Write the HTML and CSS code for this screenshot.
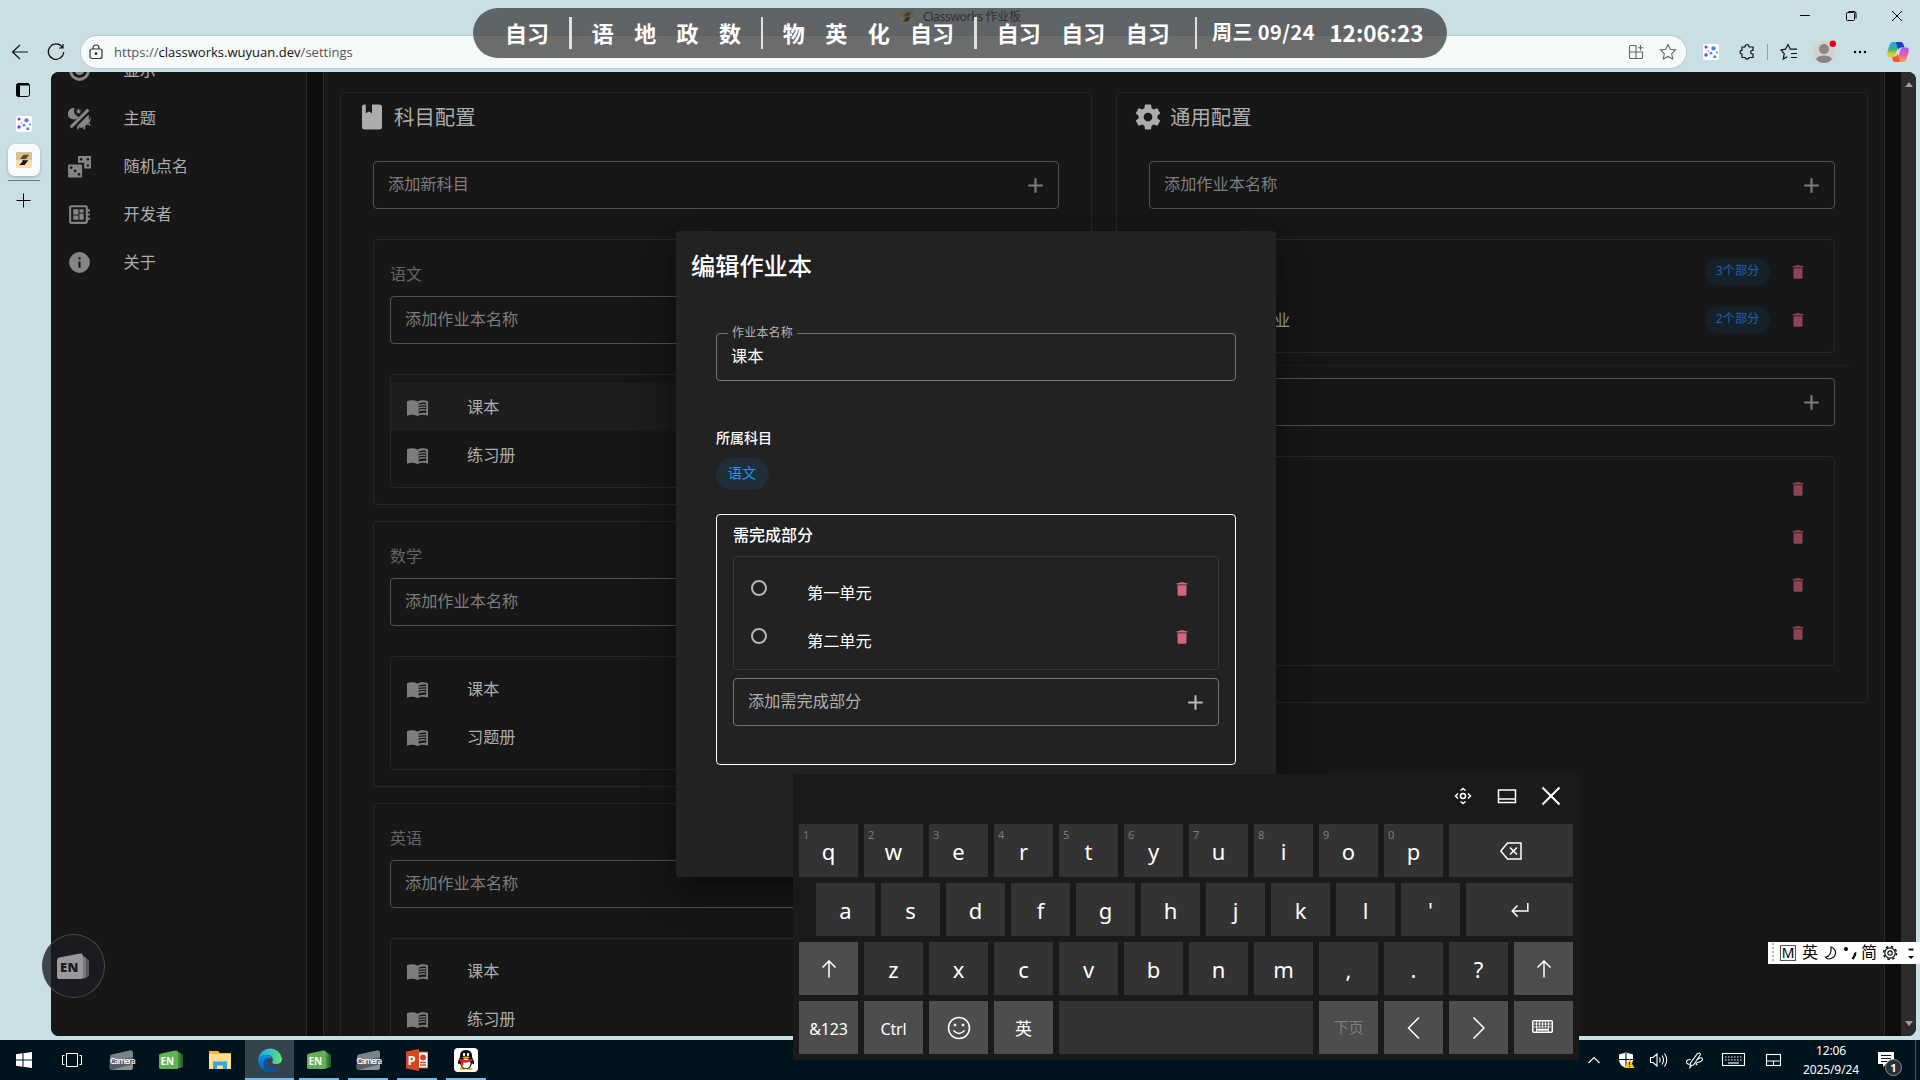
FILE: index.html
```html
<!DOCTYPE html>
<html lang="zh-CN">
<head>
<meta charset="utf-8">
<title>Classworks 作业板</title>
<link rel="stylesheet" href="styles.css">
</head>
<body>
<svg class="defs" aria-hidden="true">
  <symbol id="i-delete" viewBox="0 0 24 24"><path d="M19,4H15.5L14.5,3H9.5L8.5,4H5V6H19M6,19A2,2 0 0,0 8,21H16A2,2 0 0,0 18,19V7H6V19Z"/></symbol>
  <symbol id="i-plus" viewBox="0 0 24 24"><path d="M19,13H13V19H11V13H5V11H11V5H13V11H19V13Z"/></symbol>
  <symbol id="i-open" viewBox="0 0 24 24"><path d="M1 5.500C4.500 4 9 4 12 5.900C15 4 19.500 4 23 5.500V20.500C19.500 19.200 15 19.200 12 21C9 19.200 4.500 19.200 1 20.500Z"/><path class="cut" d="M13.300 7.800C15.500 6.800 18.500 6.600 21 7.100V17.700C18.500 17.300 15.500 17.500 13.300 18.500Z"/><path class="rule" d="M13.500 9.800C16 8.900 18 8.800 20.500 9.100M13.500 12.500C16 11.600 18 11.500 20.500 11.800M13.500 15.200C16 14.300 18 14.200 20.500 14.500"/></symbol>
  <symbol id="i-fav" viewBox="0 0 16 16"><rect width="16" height="16" rx="2" fill="#fff"/><path d="M3 3L10 4.500L14 8.500M3 11L8 9L12 13.500M3 3V11M10 4.500L8 9" fill="none" style="stroke:#e6dcff;stroke-width:.7"/><g stroke="none"><circle cx="3" cy="3" r="1.500" fill="#7a3cf0"/><circle cx="3" cy="11" r="1.700" fill="#7a3cf0"/><g fill="#3f83f8"><circle cx="10.500" cy="4.300" r="2.100"/><circle cx="8" cy="9.300" r="1.300"/><circle cx="11.800" cy="12.800" r="1.500"/><circle cx="14" cy="8.500" r="1"/><circle cx="5.500" cy="7" r=".8"/></g></g></symbol>
  <symbol id="i-cw" viewBox="0 0 16 16"><rect width="16" height="16" fill="#f7dcb0"/><path d="M0 0H16V8H0Z" fill="#d9bf92"/><path d="M7.500 2.800H13L10 7H4Z" fill="#5c4a2c"/><path d="M6 8.200H12.500L8.500 13H3.200L6.500 9.800Z" fill="#17120b"/></symbol>
  <symbol id="i-en" viewBox="0 0 24 20"><path d="M19 2.500L24 4.500V17L19 18.500Z" fill="#2c5f2d"/><path d="M18 1.500L21.500 3V18L18 18.500Z" fill="#3f8a3e"/><path d="M0 5.500Q0 3.800 2 3.400L16.500 .5Q19 .2 19 2.500V17.500Q19 19 17.500 19H2Q0 19 0 17.500Z" fill="#63b155"/></symbol>
  <symbol id="i-cam" viewBox="0 0 24 21"><path d="M1 7Q1 5 3 4.600L21 .6Q24 .2 24 3V17Q24 20 21.500 20H3Q0 20 .3 17Z" fill="#565c64"/><path d="M1 7Q1 5 3 4.600L21 .6Q24 .2 24 3V7L1 12Z" fill="#7c828a"/><path d="M3 20L24 14V17Q24 20 21.500 20Z" fill="#8a8f95"/></symbol>
</svg>

<div class="desktop">
  <header class="titlebar">
    <div class="page-title"><svg width="14" height="14"><use href="#i-cw"/></svg><span>Classworks 作业板</span></div>
    <div class="win-controls">
      <svg viewBox="0 0 46 32"><path d="M18 15.500H28"/></svg>
      <svg viewBox="0 0 46 32"><path d="M18.500 13.500Q18.500 12.500 19.500 12.500H25.500Q26.500 12.500 26.500 13.500V19.500Q26.500 20.500 25.500 20.500H19.500Q18.500 20.500 18.500 19.500ZM20.500 11.500H26Q28 11.500 28 13.500V18.500"/></svg>
      <svg viewBox="0 0 46 32"><path d="M18 11L28 21M28 11L18 21"/></svg>
    </div>
  </header>

  <div class="toolbar">
    <div class="nav">
      <svg width="20" height="20" viewBox="0 0 20 20"><path d="M18 10H2.500M10 3L2.500 10L10 17"/></svg>
      <svg width="20" height="20" viewBox="0 0 20 20"><path d="M16.500 5.500A7.700 7.700 0 1 0 17.700 10M17 2V6H13"/></svg>
    </div>
    <div class="address">
      <svg class="lock" width="14" height="16" viewBox="0 0 14 16"><rect x="1" y="5" width="12" height="9.500" rx="2"/><path d="M4 5V4A3 3 0 0 1 10 4V5"/><circle cx="7" cy="9.700" r=".8" fill="#333"/></svg>
      <div class="url">https://<b>classworks.wuyuan.dev</b>/settings</div>
      <svg class="grey" width="16" height="16" viewBox="0 0 16 16"><path d="M1.500 8H14.500M1.500 2.500Q1.500 1.500 2.500 1.500H8V14.500H2.500Q1.500 14.500 1.500 13.500ZM8 8H14.500V13.500Q14.500 14.500 13.500 14.500H8M12.500 1V6.500M9.800 3.700H15.300"/></svg>
      <svg class="grey" width="18" height="18" viewBox="0 0 18 18"><path d="M9 1.500L11.300 6.300L16.500 7L12.700 10.700L13.700 16L9 13.400L4.300 16L5.300 10.700L1.500 7L6.700 6.300Z"/></svg>
    </div>
    <div class="tools">
      <svg width="16" height="16"><use href="#i-fav"/></svg>
      <svg class="ext" width="18" height="18" viewBox="0 0 18 18"><path d="M4 4H7A2 2 0 0 1 11 3.500L11.200 4H15V7.500H14A1.800 1.800 0 0 0 14 11H15V14.500H11.200A2.200 2.200 0 0 1 7 14.500H4V11H3.500A1.900 1.900 0 0 1 3.500 7.300H4Z"/></svg>
      <i class="sep"></i>
      <svg class="favs" width="18" height="18" viewBox="0 0 18 18"><path d="M7.200 13.800L3.300 16L4.200 10.700L1 7L5.500 6.200L8 1.500L10.300 6.200H17M11 10.500H17M11 14.500H17"/></svg>
      <svg class="me" width="24" height="24" viewBox="0 0 24 24"><circle cx="12" cy="12" r="11" fill="#d3d0cd"/><circle cx="12" cy="9" r="5" fill="#8a8683"/><path d="M4 19.500Q5 15.500 12 15.500T20 19.500Q16.500 23 12 23T4 19.500Z" fill="#8a8683"/><circle cx="20.800" cy="3.800" r="3.200" fill="#e80012"/></svg>
      <svg class="dots" width="16" height="16" viewBox="0 0 16 16"><circle cx="3" cy="8" r="1.200"/><circle cx="8" cy="8" r="1.200"/><circle cx="13" cy="8" r="1.200"/></svg>
      <svg class="pilot" width="24" height="22" viewBox="0 0 24 22">
        <defs><linearGradient id="ga" x2="0" y2="1"><stop offset="0" stop-color="#1fa7f0"/><stop offset=".5" stop-color="#3bb673"/><stop offset=".8" stop-color="#e6c72e"/></linearGradient><linearGradient id="gb" x2="0" y2="1"><stop offset="0" stop-color="#a855f7"/><stop offset=".5" stop-color="#ee5fa0"/><stop offset="1" stop-color="#ffa05a"/></linearGradient></defs>
        <path d="M13 1H7Q4.500 1 3.500 4L1.500 11Q.5 16 4 16H7Q9 16 10 12.500L13 1Z" fill="url(#ga)"/><path d="M10 1H15Q17 1 18 5L18.500 6.500H15Q13 6.500 12 9Z" fill="#1743c4"/><path d="M11 21H17Q19.500 21 20.500 18L22.700 11Q23.700 6.500 20 6.500H17Q15 6.500 14 10Z" fill="url(#gb)"/><path d="M14 21H9Q7 21 6.500 18L6 16H8Q10 16 12 13Z" fill="#ef5a2e"/></svg>
    </div>
  </div>

  <div class="window-body">
    <aside class="tabs">
      <svg class="t-panel" width="16" height="16" viewBox="0 0 16 16"><rect x="1.500" y="1.500" width="13" height="13" rx="2" fill="none" stroke="#000"/><path d="M1.500 3Q1.500 1.500 3 1.500H5V14.500H3Q1.500 14.500 1.500 13ZM2 1.500H14V3.500H2Z"/></svg>
      <svg class="t-site" width="16" height="16"><use href="#i-fav"/></svg>
      <div class="t-active"><svg width="16" height="16"><use href="#i-cw"/></svg></div>
      <i class="t-line"></i>
      <svg class="t-add" width="16" height="16" viewBox="0 0 16 16"><path d="M8.500 1.500V15.500M1.500 8.500H15.500" stroke="#000"/></svg>
    </aside>

    <div class="page">
      <nav class="side">
        <a><svg viewBox="0 0 24 24"><circle cx="12" cy="12" r="10"/><path class="cut" d="M12 5A7 7 0 1 0 12 19A7 7 0 0 0 12 5Z"/><circle cx="12" cy="12" r="4.500"/></svg>显示</a>
        <a><svg viewBox="0 0 24 24"><path d="M7.500 2A5.500 5.500 0 1 0 11 10.500A6 6 0 0 1 7.500 2ZM11 2L12 4L14 4.200L12.500 5.600L13 7.500L11 6.500L9.500 7.500L9.800 5.500L8.500 4.200L10.300 4ZM19.500 2.500L21.500 4.500L4.500 21.500L2.500 19.500ZM20.500 8.500L10 19A5 5 0 0 0 18.500 18A5.500 5.500 0 0 0 20.500 8.500ZM21 9L23.500 12L21 13ZM21 15.500L23 19L19.500 18ZM17.500 20L17 23L14.500 20.500ZM12.500 20L10 23L9.500 19.500Z"/></svg>主题</a>
        <a><svg viewBox="0 0 24 24"><path d="M11 2H22.500Q23 2 23 3V13.500Q23 14 22.500 14H16.500V8.500H10.500V3Q10.500 2 11 2Z"/><rect x="1" y="10" width="13.500" height="12.500" rx="1"/><g class="cut"><circle cx="13.500" cy="5" r="1.200"/><circle cx="20" cy="5" r="1.200"/><circle cx="20" cy="11" r="1.200"/><circle cx="4" cy="13" r="1.300"/><circle cx="7.700" cy="16.200" r="1.300"/><circle cx="11.500" cy="19.500" r="1.300"/></g></svg>随机点名</a>
        <a><svg viewBox="0 0 24 24"><path d="M22,9V7H20V5A2,2 0 0,0 18,3H4A2,2 0 0,0 2,5V19A2,2 0 0,0 4,21H18A2,2 0 0,0 20,19V17H22V15H20V13H22V11H20V9H22M18,19H4V5H18V19M6,13H11V17H6V13M12,7H16V10H12V7M6,7H11V12H6V7M12,11H16V17H12V11Z"/></svg>开发者</a>
        <a><svg viewBox="0 0 24 24"><path d="M13,9H11V7H13M13,17H11V11H13M12,2A10,10 0 1,0 22,12 10,10 0 0,0 12,2Z"/></svg>关于</a>
      </nav>

      <main class="main">
        <section class="panel">
          <h2><svg viewBox="0 0 24 24"><path d="M18 22A2 2 0 0 0 20 20V4C20 2.890 19.100 2 18 2H12V9L9.500 7.500L7 9V2H6A2 2 0 0 0 4 4V20A2 2 0 0 0 6 22H18Z"/></svg><span>科目配置</span></h2>
          <div class="field"><span>添加新科目</span><svg><use href="#i-plus"/></svg></div>
          <div class="subjects">
            <article class="subject">
              <h3>语文</h3>
              <div class="field"><span>添加作业本名称</span></div>
              <ul class="list"><li class="hover"><svg><use href="#i-open"/></svg><span>课本</span></li><li><svg><use href="#i-open"/></svg><span>练习册</span></li></ul>
            </article>
            <article class="subject">
              <h3>数学</h3>
              <div class="field"><span>添加作业本名称</span></div>
              <ul class="list"><li><svg><use href="#i-open"/></svg><span>课本</span></li><li><svg><use href="#i-open"/></svg><span>习题册</span></li></ul>
            </article>
            <article class="subject">
              <h3>英语</h3>
              <div class="field"><span>添加作业本名称</span></div>
              <ul class="list"><li><svg><use href="#i-open"/></svg><span>课本</span></li><li><svg><use href="#i-open"/></svg><span>练习册</span></li></ul>
            </article>
          </div>
        </section>

        <section class="panel">
          <h2><svg viewBox="0 0 24 24"><path d="M12,15.500A3.500,3.500 0 0,1 8.500,12A3.500,3.500 0 0,1 12,8.500A3.500,3.500 0 0,1 15.500,12A3.500,3.500 0 0,1 12,15.500M19.430,12.970C19.470,12.650 19.500,12.330 19.500,12C19.500,11.670 19.470,11.340 19.430,11L21.540,9.370C21.730,9.220 21.780,8.950 21.660,8.730L19.660,5.270C19.540,5.050 19.270,4.960 19.050,5.050L16.560,6.050C16.040,5.660 15.500,5.320 14.870,5.070L14.500,2.420C14.460,2.180 14.250,2 14,2H10C9.750,2 9.540,2.180 9.500,2.420L9.130,5.070C8.500,5.320 7.960,5.660 7.440,6.050L4.950,5.050C4.730,4.960 4.460,5.050 4.340,5.270L2.340,8.730C2.210,8.950 2.270,9.220 2.460,9.370L4.570,11C4.530,11.340 4.500,11.670 4.500,12C4.500,12.330 4.530,12.650 4.570,12.970L2.460,14.630C2.270,14.780 2.210,15.050 2.340,15.270L4.340,18.730C4.460,18.950 4.730,19.030 4.950,18.950L7.440,17.940C7.960,18.340 8.500,18.680 9.130,18.930L9.500,21.580C9.540,21.820 9.750,22 10,22H14C14.250,22 14.460,21.820 14.500,21.580L14.870,18.930C15.500,18.670 16.040,18.340 16.560,17.940L19.050,18.950C19.270,19.030 19.540,18.950 19.660,18.730L21.660,15.270C21.780,15.050 21.730,14.780 21.540,14.630L19.430,12.970Z"/></svg><span>通用配置</span></h2>
          <div class="field"><span>添加作业本名称</span><svg><use href="#i-plus"/></svg></div>
          <ul class="list common">
            <li><em class="chip">3个部分</em><svg class="del"><use href="#i-delete"/></svg></li>
            <li><span class="name">业</span><em class="chip">2个部分</em><svg class="del"><use href="#i-delete"/></svg></li>
          </ul>
          <hr>
          <div class="field"><span></span><svg><use href="#i-plus"/></svg></div>
          <ul class="list common">
            <li><svg class="del"><use href="#i-delete"/></svg></li>
            <li><svg class="del"><use href="#i-delete"/></svg></li>
            <li><svg class="del"><use href="#i-delete"/></svg></li>
            <li><svg class="del"><use href="#i-delete"/></svg></li>
          </ul>
        </section>
      </main>

      <div class="scroll"><i class="up"></i><i class="down"></i></div>
    </div>
  </div>

  <footer class="taskbar">
    <div class="apps">
      <div class="app"><svg width="16" height="16" viewBox="0 0 16 16" fill="#fff"><path d="M0 2.200L6.500 1.300V7.500H0ZM7.500 1.200L16 0V7.500H7.500ZM0 8.500H6.500V14.700L0 13.800ZM7.500 8.500H16V16L7.500 14.800Z"/></svg></div>
      <div class="app"><svg width="20" height="16" viewBox="0 0 20 16" fill="none" stroke="#fff"><path d="M4.500 1.500H15.500V14.500H4.500ZM2.500 3.500H.5V12.500H2.500M17.500 3.500H19.500V12.500H17.500"/></svg></div>
      <div class="app"><div class="badge cam"><svg width="24" height="21"><use href="#i-cam"/></svg><span>Camera</span></div></div>
      <div class="app"><div class="badge en"><svg width="24" height="20"><use href="#i-en"/></svg><span>EN</span></div></div>
      <div class="app"><svg width="22" height="18" viewBox="0 0 22 18"><path d="M0 0H9L11 2H22V18H0Z" fill="#f5b83d"/><path d="M0 3H22V18H0Z" fill="#ffe08a"/><path d="M4 18V10.500H18V18H14V14.500H8V18Z" fill="#31a8e0"/></svg></div>
      <div class="app on wide"><svg width="24" height="24" viewBox="0 0 24 24">
        <defs><linearGradient id="ea" x1="0" x2="1"><stop offset="0" stop-color="#1f9de0"/><stop offset=".5" stop-color="#35c2cf"/><stop offset="1" stop-color="#6be35a"/></linearGradient><linearGradient id="eb" x1="0" y1="0" x2="0" y2="1"><stop offset="0" stop-color="#1590df"/><stop offset="1" stop-color="#0b58a8"/></linearGradient></defs>
        <path d="M.3 10.500A12 12 0 0 1 24 10.500Q24 16 18 16Q14 16 14.300 14Q15.500 12 14.500 10Q12.500 6 7 7Q3 7.800 .3 10.500Z" fill="url(#ea)"/><path d="M0 12Q1 7.500 7 7Q12.500 6.500 14.500 10Q9 9 8.500 13.500Q8.500 20.500 16 21Q19 21 22 18.500Q18 24 12 24A12 12 0 0 1 0 12Z" fill="url(#eb)"/><path d="M8.500 13.500Q8 19.500 14 20.800Q19 21.500 22.500 17.500Q19 24 12 24Q5 22 5.500 15Q6 10.500 10 9.500Q8.600 11 8.500 13.500Z" fill="#0c4f9c"/></svg></div>
      <div class="app on"><div class="badge en"><svg width="24" height="20"><use href="#i-en"/></svg><span>EN</span></div></div>
      <div class="app on"><div class="badge cam"><svg width="24" height="21"><use href="#i-cam"/></svg><span>Camera</span></div></div>
      <div class="app on"><div class="badge ppt"><svg width="22" height="22" viewBox="0 0 22 22"><path d="M12 3H22V19H12Z" fill="#fff" stroke="#d24726"/><circle cx="17" cy="8.500" r="3" fill="#d24726"/><path d="M14 13.500H20M14 16H20" stroke="#d24726" stroke-width="1.300"/><path d="M0 2.500L13 0V22L0 19.500Z" fill="#d24726"/></svg><span>P</span></div></div>
      <div class="app on"><svg width="24" height="24" viewBox="0 0 24 24"><rect width="24" height="24" rx="4" fill="#fff"/><ellipse cx="8.500" cy="20.800" rx="3" ry="1.300" fill="#f6a800"/><ellipse cx="15.500" cy="20.800" rx="3" ry="1.300" fill="#f6a800"/><path d="M6 9Q5.500 2 12 2T18 9Q20.500 13 20 16Q19 17 18 15Q17 21 12 21T6 15Q5 17 4 16Q3.500 13 6 9Z" fill="#0b0b0b"/><ellipse cx="12" cy="15.500" rx="4.500" ry="5" fill="#fff"/><path d="M5.500 10.500Q12 13.500 18.500 10.500V13Q12 15.500 9.500 14.500V17.500H7V13.700Q5.500 13 5.500 13Z" fill="#e8202a"/><ellipse cx="10" cy="6.500" rx="1.200" ry="1.800" fill="#fff"/><ellipse cx="14" cy="6.500" rx="1.200" ry="1.800" fill="#fff"/><ellipse cx="12" cy="9.600" rx="3.500" ry="1.100" fill="#f6a800"/></svg></div>
    </div>
    <div class="tray">
      <svg viewBox="0 0 30 40"><path d="M9.500 23L15 17.500L20.500 23"/></svg>
      <svg viewBox="0 0 34 40"><path d="M17 12.500L24 14.500V20Q24 25 17 28Q10 25 10 20V14.500Z" fill="#fff" stroke="none"/><path d="M17 13V27M10 19.500H24" stroke="#00141d"/><path d="M20.500 19L25.500 28H15.500Z" fill="#ffc20e" stroke="none"/><path d="M20.500 22V25M20.500 26V27" stroke="#222"/></svg>
      <svg viewBox="0 0 32 40"><path d="M7.500 17.500H10L14 14V26L10 22.500H7.500ZM16.500 17.500Q18 20 16.500 22.500M19 15.500Q22 20 19 24.500M21.500 13.500Q26 20 21.500 26.500"/></svg>
      <svg viewBox="0 0 38 40"><path d="M16 25.500L14.500 27.500L15 23L22 13.500Q24.500 12 25 14.500L18 25ZM15 19.500Q10.500 19.500 11 22.500Q12 25 15 24M21 20Q26 16 27 19Q27 21.500 22 22.500Q19 24 22 25"/></svg>
      <svg viewBox="0 0 40 40"><rect x="8.500" y="13.500" width="22" height="12"/><path d="M11 17H28M11 20H28" stroke-dasharray="1.500 1.500"/><path d="M14 23H25"/></svg>
      <svg viewBox="0 0 40 40"><rect x="12.500" y="14.500" width="14" height="11"/><path d="M12.500 21H26.500M19.500 21V25.500"/></svg>
      <div class="clock"><span>12:06</span><span>2025/9/24</span></div>
      <div class="notice"><svg viewBox="0 0 16 16"><path d="M0 0H16V12H8L5 15V12H0Z" fill="#fff" stroke="none"/><path d="M3 3.500H13M3 6.500H13M3 9.500H9" stroke="#00141d"/></svg><b>1</b></div>
    </div>
  </footer>
</div>

<div class="dialog">
  <h1>编辑作业本</h1>
  <div class="dialog-body">
    <div class="field named"><label>作业本名称</label><span>课本</span></div>
    <h4>所属科目</h4>
    <em class="chip big">语文</em>
    <div class="parts">
      <h5>需完成部分</h5>
      <ul class="list">
        <li><i class="ring"></i><span>第一单元</span><svg class="del"><use href="#i-delete"/></svg></li>
        <li><i class="ring"></i><span>第二单元</span><svg class="del"><use href="#i-delete"/></svg></li>
      </ul>
      <div class="field"><span>添加需完成部分</span><svg><use href="#i-plus"/></svg></div>
    </div>
  </div>
</div>

<div class="schedule">
  <span>自习</span><i class="b4"></i><span>语</span><span>地</span><span>政</span><span>数</span><i></i><span>物</span><span>英</span><span>化</span><span>自习</span><i class="b4"></i><span>自习</span><span>自习</span><span>自习</span><i class="last"></i><span class="date">周三 09/24</span><span class="time">12:06:23</span>
</div>

<div class="ball"><svg width="33" height="27" viewBox="0 0 33 27"><path d="M29 5L32 7V23L29 25Z" fill="#55575c"/><path d="M26 3L29 4.500V24.500L26 26Z" fill="#77787c"/><path d="M0 7Q0 5 2 4.500L23 .6Q26 .2 26 3V24Q26 26 24 26H2Q0 26 0 24Z" fill="#98999b"/></svg><span>EN</span></div>

<div class="osk">
  <div class="osk-top">
    <svg viewBox="0 0 44 50"><circle cx="22" cy="25" r="2.500"/><path d="M19.500 19.500L22 17.500L24.500 19.500M19.500 30.500L22 32.500L24.500 30.500M17 22.500L14.500 25L17 27.500M27 22.500L29.500 25L27 27.500"/></svg>
    <svg viewBox="0 0 44 50"><rect x="13.500" y="19" width="17" height="12.500"/><path d="M13 28H31"/></svg>
    <svg viewBox="0 0 44 50"><path d="M13.500 16.500L30.500 33.500M30.500 16.500L13.500 33.500" stroke-width="2"/></svg>
  </div>
  <div class="row"><kbd><small>1</small>q</kbd><kbd><small>2</small>w</kbd><kbd><small>3</small>e</kbd><kbd><small>4</small>r</kbd><kbd><small>5</small>t</kbd><kbd><small>6</small>y</kbd><kbd><small>7</small>u</kbd><kbd><small>8</small>i</kbd><kbd><small>9</small>o</kbd><kbd><small>0</small>p</kbd><kbd class="grow"><svg width="22" height="18" viewBox="0 0 22 18"><path d="M7.500 1H21V17H7.500L.8 9ZM10 5.500L17 12.500M17 5.500L10 12.500"/></svg></kbd></div>
  <div class="row indent"><kbd>a</kbd><kbd>s</kbd><kbd>d</kbd><kbd>f</kbd><kbd>g</kbd><kbd>h</kbd><kbd>j</kbd><kbd>k</kbd><kbd>l</kbd><kbd>'</kbd><kbd class="grow"><svg width="18" height="14" viewBox="0 0 18 14"><path d="M16.800 0V8H1.200M6.500 2.500L1.200 8L6.500 13.500"/></svg></kbd></div>
  <div class="row"><kbd class="fn"><svg width="16" height="18" viewBox="0 0 16 18"><path d="M8 17.500V1M1.500 7.500L8 1L14.500 7.500"/></svg></kbd><kbd>z</kbd><kbd>x</kbd><kbd>c</kbd><kbd>v</kbd><kbd>b</kbd><kbd>n</kbd><kbd>m</kbd><kbd>,</kbd><kbd>.</kbd><kbd>?</kbd><kbd class="fn"><svg width="16" height="18" viewBox="0 0 16 18"><path d="M8 17.500V1M1.500 7.500L8 1L14.500 7.500"/></svg></kbd></div>
  <div class="row"><kbd class="fn word">&amp;123</kbd><kbd class="fn word">Ctrl</kbd><kbd class="fn"><svg width="24" height="24" viewBox="0 0 24 24"><circle cx="12" cy="12" r="10.500"/><path d="M6.500 14.500Q12 20.500 17.500 14.500"/><circle cx="8" cy="9" r="1" fill="#fff" stroke-width="1"/><circle cx="16" cy="9" r="1" fill="#fff" stroke-width="1"/></svg></kbd><kbd class="fn word cjk">英</kbd><kbd class="grow"></kbd><kbd class="fn word cjk off">下页</kbd><kbd class="fn"><svg width="14" height="24" viewBox="0 0 14 24"><path d="M12 1.500L1.500 12L12 22.500"/></svg></kbd><kbd class="fn"><svg width="14" height="24" viewBox="0 0 14 24"><path d="M1.500 1.500L12 12L1.500 22.500"/></svg></kbd><kbd class="fn kb"><svg width="21" height="13" viewBox="0 0 21 13"><rect x=".75" y=".75" width="19.500" height="11.500" rx="1"/><path d="M2 4H19M2 7H19M4.500 1V7M7.500 1V7M10.500 1V7M13.500 1V7M16.500 1V7M4.500 7V12M16.500 7V12" stroke-width=".8"/><path d="M5 9.700H16" stroke-width="2"/></svg></kbd></div>
</div>

<div class="ime">
  <i class="grip"></i><b>M</b><span>英</span>
  <svg width="16" height="16" viewBox="0 0 16 16"><path d="M8 2Q13 4 12.500 8.500T6 14Q3.500 14 2.500 12Q9 11 8 2Z"/></svg>
  <svg width="16" height="16" viewBox="0 0 16 16"><circle cx="4" cy="4" r="2" fill="#000" stroke="none"/><path d="M13 7.500Q14 9 10.500 14" stroke-width="2.500"/></svg>
  <span>简</span>
  <svg class="gear" width="16" height="16" viewBox="0 0 16 16"><circle cx="8" cy="8" r="2.200"/><circle cx="8" cy="8" r="5.200"/><circle cx="8" cy="8" r="6.500" stroke-width="1.500" stroke-dasharray="2.500 2.600"/></svg>
  <svg class="opts" width="8" height="16" viewBox="0 0 8 16"><path d="M1.500 4.500H6.500" stroke-width="2"/><path d="M1 11H7L4 14Z" fill="#000" stroke="none"/></svg>
</div>
</body>
</html>
```
FILE: styles.css
```css
* { box-sizing: border-box; margin: 0; padding: 0; }
body { width: 1920px; height: 1080px; overflow: hidden; position: relative; background: #c9dfe3; font-family: "Noto Sans", "Noto Sans CJK SC", sans-serif; color: #fff; }
.defs { position: absolute; width: 0; height: 0; }
svg { display: block; flex: none; }
ul { list-style: none; }
em, i { font-style: normal; }
.desktop { display: flex; flex-direction: column; height: 1080px; }

/* Browser chrome */
.titlebar { height: 36px; display: flex; align-items: flex-start; }
.page-title { display: flex; align-items: center; gap: 9px; height: 33px; margin-left: 900px; flex: 1; font-size: 12px; color: #111; letter-spacing: -.3px; }
.page-title span { margin-top: -1px; }
.win-controls { display: flex; }
.win-controls svg { width: 46px; height: 32px; fill: none; stroke: #000; stroke-width: 1; }
.toolbar { height: 32px; display: flex; align-items: center; }
.nav { display: flex; gap: 16px; width: 81px; padding-left: 10px; }
.nav svg, .ext, .favs { fill: none; stroke: #111; stroke-width: 1.2; }
.address { width: 1605px; height: 32px; border-radius: 16px; background: #f5f9fa; box-shadow: 0 0 0 1px #bccbcf; display: flex; align-items: center; padding: 0 9px 0 8px; }
.lock { fill: none; stroke: #333; stroke-width: 1.2; margin-right: 11px; }
.url { flex: 1; font-family: "Open Sans", sans-serif; font-size: 13px; color: #555; letter-spacing: .02px; }
.url b { font-weight: 400; color: #111; }
.grey { fill: none; stroke: #666; stroke-width: 1.1; }
.grey + .grey { margin-left: 15px; }
.tools { display: flex; align-items: center; padding-left: 17px; }
.ext { margin-left: 19px; }
.sep { width: 1px; height: 16px; background: #8fa5a9; margin-left: 11px; }
.favs { margin-left: 12px; }
.me { margin-left: 14px; }
.dots { margin-left: 16px; }
.pilot { margin-left: 18px; }
.window-body { height: 964px; margin-top: 4px; display: flex; }
.tabs { width: 51px; display: flex; flex-direction: column; align-items: flex-start; }
.t-panel { margin: 10px 0 0 15px; }
.t-site { margin: 18px 0 0 16px; }
.t-active { margin: 12px 0 0 8px; width: 32px; height: 32px; border-radius: 7px; background: #f8fbfb; display: grid; place-items: center; box-shadow: 0 1px 3px rgba(0,0,0,.25); }
.t-line { width: 32px; height: 1px; margin: 4px 0 0 8px; background: #6a777a; }
.t-add { margin: 11px 0 0 15px; }

/* Settings page */
.page { width: 1865px; height: 964px; display: flex; background: #0d0d0d; border-radius: 8px; overflow: hidden; color: #acacac; }
.side { width: 256px; background: #171717; border-right: 1px solid #2b2b2b; }
.side a { height: 48px; display: flex; align-items: center; gap: 32px; padding-left: 15.500px; font-size: 16.200px; }
.side a:first-child { margin-top: -27px; }
.side svg { width: 25px; height: 25px; margin-top: 2px; fill: #858585; }
.side .cut { fill: #171717; }
.main { margin-left: 16px; width: 1562px; background: #171717; border: solid #2b2b2b; border-width: 0 1px; padding: 20px 16px; display: grid; grid-template-columns: 752px 752px; gap: 24px; align-items: start; height: 964px; overflow: hidden; }
.panel { border: 1px solid #272727; border-radius: 5px; padding: 0 32px 36px; }
.panel h2 { height: 48px; margin-left: -16px; display: flex; align-items: center; gap: 7px; font-size: 20.400px; font-weight: 400; }
.panel h2 span { margin-top: -2px; }
.panel h2 svg { width: 30px; height: 30px; fill: #acacac; }
.panel h2 + .field { margin-top: 20px; }
.field { height: 48px; border: 1px solid #515151; border-radius: 4px; display: flex; align-items: center; justify-content: space-between; padding: 0 10.500px 0 14px; font-size: 16.200px; color: #7d7d7d; }
.field svg { width: 25px; height: 25px; fill: #7d7d7d; }
.field span { margin-top: -4px; }
.subjects { margin-top: 30px; display: flex; flex-direction: column; gap: 16px; }
.subject { height: 266px; border: 1px solid #272727; border-radius: 4px; padding: 0 16px; }
.subject h3 { height: 56px; padding-top: 22px; line-height: 24px; font-size: 16px; font-weight: 400; color: #646464; }
.list { border: 1px solid #272727; border-radius: 4px; padding: 8px 0; }
.subject .list { margin-top: 30px; }
.list li { height: 48px; display: flex; align-items: center; font-size: 16.200px; }
.subject li { padding-left: 15px; gap: 38px; }
.subject li svg { width: 23px; height: 23px; fill: #7d7d7d; }
.subject li span { margin-top: -3px; }
.cut { fill: #171717; }
.rule { fill: none; stroke: #7d7d7d; stroke-width: 1.400; }
.hover { background: #1d1d1d; }
.common { margin-top: 30px; }
.common li { justify-content: flex-end; padding-right: 27px; }
.name { margin: -3px auto 0 124px; }
.chip { display: flex; align-items: center; justify-content: center; width: 64px; height: 26px; border-radius: 13px; background: #17212a; color: #1c62a9; font-size: 12.200px; padding: 0 1px 4px 0; }
.del { width: 18px; height: 18px; fill: #8f4453; }
.chip + .del { margin-left: 19px; }
hr { border: 0; height: 1px; background: #1f1f1f; margin: 12px -16px; }
.scroll { width: 15px; margin-left: 16px; background: #2c2c2c; display: flex; flex-direction: column; justify-content: space-between; align-items: center; padding: 10px 0 10px; }
.up, .down { border: solid transparent; border-width: 0 4.500px 5px; border-bottom-color: #9c9c9c; }
.down { border-width: 5px 4.500px 0; border-top-color: #9c9c9c; }

/* Dialog */
.dialog { position: absolute; left: 676px; top: 231px; width: 600px; height: 646px; border-radius: 4px; background: #222; box-shadow: 0 11px 15px -7px rgba(0,0,0,.2), 0 24px 38px 3px rgba(0,0,0,.2), 0 9px 46px 8px rgba(0,0,0,.2); }
.dialog h1 { height: 68px; padding-left: 15px; font-size: 24.200px; line-height: 69px; font-weight: 500; }
.dialog-body { padding: 34px 40px 0; }
.dialog .field { border-color: #747474; color: #b0b0b0; }
.dialog .field svg { fill: #bbb; }
.dialog .named { position: relative; color: #fff; }
.named label { position: absolute; left: 11px; top: -10px; padding: 0 4px; line-height: 17px; font-size: 12px; background: #222; color: #b5b5b5; letter-spacing: .2px; }
.dialog h4 { margin-top: 45px; height: 23px; line-height: 23px; font-size: 14px; font-weight: 500; }
.chip.big { width: 53px; height: 32px; border-radius: 16px; margin-top: 9px; background: #212e3a; color: #2196f3; font-size: 14.200px; }
.parts { margin-top: 24px; height: 251px; border: 1px solid #fff; border-radius: 4px; padding: 0 16px; }
.parts h5 { height: 41px; line-height: 41px; font-size: 16px; font-weight: 500; }
.parts .list { border-color: #383838; }
.parts li { padding: 0 27px 0 17px; }
.parts li span { flex: 1; margin: 5px 0 0 40px; }
.parts .del { fill: #cf6679; }
.ring { width: 16px; height: 16px; border: 2px solid #b5b5b5; border-radius: 50%; margin-top: -2px; }
.parts .field { margin-top: 8px; }

/* Class schedule strip */
.schedule { position: absolute; left: 473px; top: 8px; width: 974px; height: 50px; border-radius: 25px; background: rgba(56,56,56,.73); display: flex; align-items: center; gap: 20.400px; padding-left: 32px; font: 700 22px "Noto Sans CJK SC", sans-serif; white-space: nowrap; }
.schedule span { flex: none; margin-top: -3px; }
.schedule i { width: 2px; height: 32px; background: #e0e0e0; flex: none; margin: 0 -.5px; }
.schedule .b4 { width: 3px; }
.schedule .last { margin-left: 5px; margin-right: -5.500px; }
.schedule .date { font-size: 20px; width: 103px; letter-spacing: .45px; }
.schedule .time { font-size: 22.500px; margin-left: -6px; }

.ball { position: absolute; left: 42px; top: 934px; width: 63px; height: 64px; border-radius: 50%; border: 1px solid #47484b; background: rgba(28,29,36,.8); padding: 18px 0 0 14px; }
.ball span { position: absolute; left: 17px; top: 24px; font: 800 13px/16px "Open Sans", sans-serif; color: #1b1c22; letter-spacing: .3px; }

/* Touch keyboard */
.osk { position: absolute; left: 793px; top: 774px; width: 786px; height: 286px; background: #1a1a1a; padding: 0 6px; display: flex; flex-direction: column; gap: 6px; font-family: "Noto Sans", sans-serif; }
.osk svg { fill: none; stroke: #fff; stroke-width: 1.500; }
.osk-top { height: 44px; display: flex; justify-content: flex-end; align-items: flex-start; }
.osk-top svg { width: 44px; height: 50px; margin-top: -3px; }
.row { display: flex; gap: 6px; height: 53px; }
.indent { padding-left: 17px; }
kbd { position: relative; width: 59px; height: 53px; background: #333; display: flex; align-items: center; justify-content: center; font: 22px "Noto Sans", sans-serif; }
kbd svg { margin-top: 0; }
kbd.grow { flex: 1; }
kbd small { position: absolute; left: 4px; top: 3px; font-size: 11px; line-height: 15px; color: #7b7b7b; }
kbd.fn { background: #4d4d4d; }
kbd.word { font-size: 16px; letter-spacing: -.2px; padding-top: 2px; }
kbd.cjk { font: 17px "Noto Sans CJK SC", sans-serif; padding-top: 0; }
kbd.off { color: #7c7c7c; font-size: 15px; padding-bottom: 2px; }
kbd.kb svg { margin: -2px 2px 0 0; }

.ime { position: absolute; left: 1768px; top: 942px; width: 152px; height: 22px; background: #fff; color: #000; display: flex; align-items: center; padding-left: 4px; font-size: 17px; }
.ime svg { fill: none; stroke: #111; stroke-width: 1.200; }
.grip { width: 2px; height: 20px; background: repeating-linear-gradient(#bbb 0 2px, transparent 2px 4px); margin-right: 6px; }
.ime b { width: 16px; height: 16px; border: 1px solid #555; font: 14px/14px "Noto Sans", sans-serif; text-align: center; margin-right: 6px; }
.ime span { width: 18px; line-height: 20px; margin: -2px 3px 0 0; font-size: 16px; }
.ime svg + svg { margin-left: 3px; margin-right: 3px; }
.ime .opts { margin-left: 9px; margin-right: 0; }

/* Taskbar */
.taskbar { height: 40px; margin-top: 4px; background: #00141d; display: flex; justify-content: space-between; }
.apps { display: flex; }
.app { width: 49px; height: 40px; display: grid; place-items: center; background: linear-gradient(#76b9ed, #76b9ed) center bottom / 0 2px no-repeat; }
.app:first-child { width: 48px; }
.app:nth-child(2) { width: 48px; }
.app:nth-child(3) { width: 50px; }
.app.on { background-size: 40px 2px; }
.app.wide { background-size: 49px 2px; background-color: #33444d; }
.app:nth-child(5) { width: 50px; }
.badge { position: relative; }
.badge span { position: absolute; left: 0; color: #fff; line-height: 12px; font-weight: 700; font-family: "Open Sans", sans-serif; }
.en span { font-size: 10px; left: 2px; top: 5px; }
.cam span { font-size: 8px; letter-spacing: -.9px; top: 5px; left: 1px; font-weight: 600; }
.ppt span { font-size: 13px; left: 2px; top: 5px; }
.tray { display: flex; }
.tray svg { height: 40px; fill: none; stroke: #fff; stroke-width: 1.100; }
.tray > svg:nth-child(1) { width: 30px; }
.tray > svg:nth-child(2) { width: 34px; }
.tray > svg:nth-child(3) { width: 32px; }
.tray > svg:nth-child(4) { width: 39px; }
.tray > svg:nth-child(5), .tray > svg:nth-child(6) { width: 40px; }
.clock { width: 74px; display: flex; flex-direction: column; align-items: center; font-size: 12px; line-height: 19px; padding-top: 1px; letter-spacing: -.1px; }
.notice { position: relative; width: 48px; border-right: 1px solid #44545c; margin-right: 4px; padding: 12px 0 0 10px; }
.notice svg { width: 16px; height: 16px; }
.notice b { position: absolute; left: 17px; top: 19px; width: 17px; height: 17px; border-radius: 50%; border: 1px solid #8a8f92; background: #2a2f33; font-size: 11px; line-height: 15px; text-align: center; }
```
